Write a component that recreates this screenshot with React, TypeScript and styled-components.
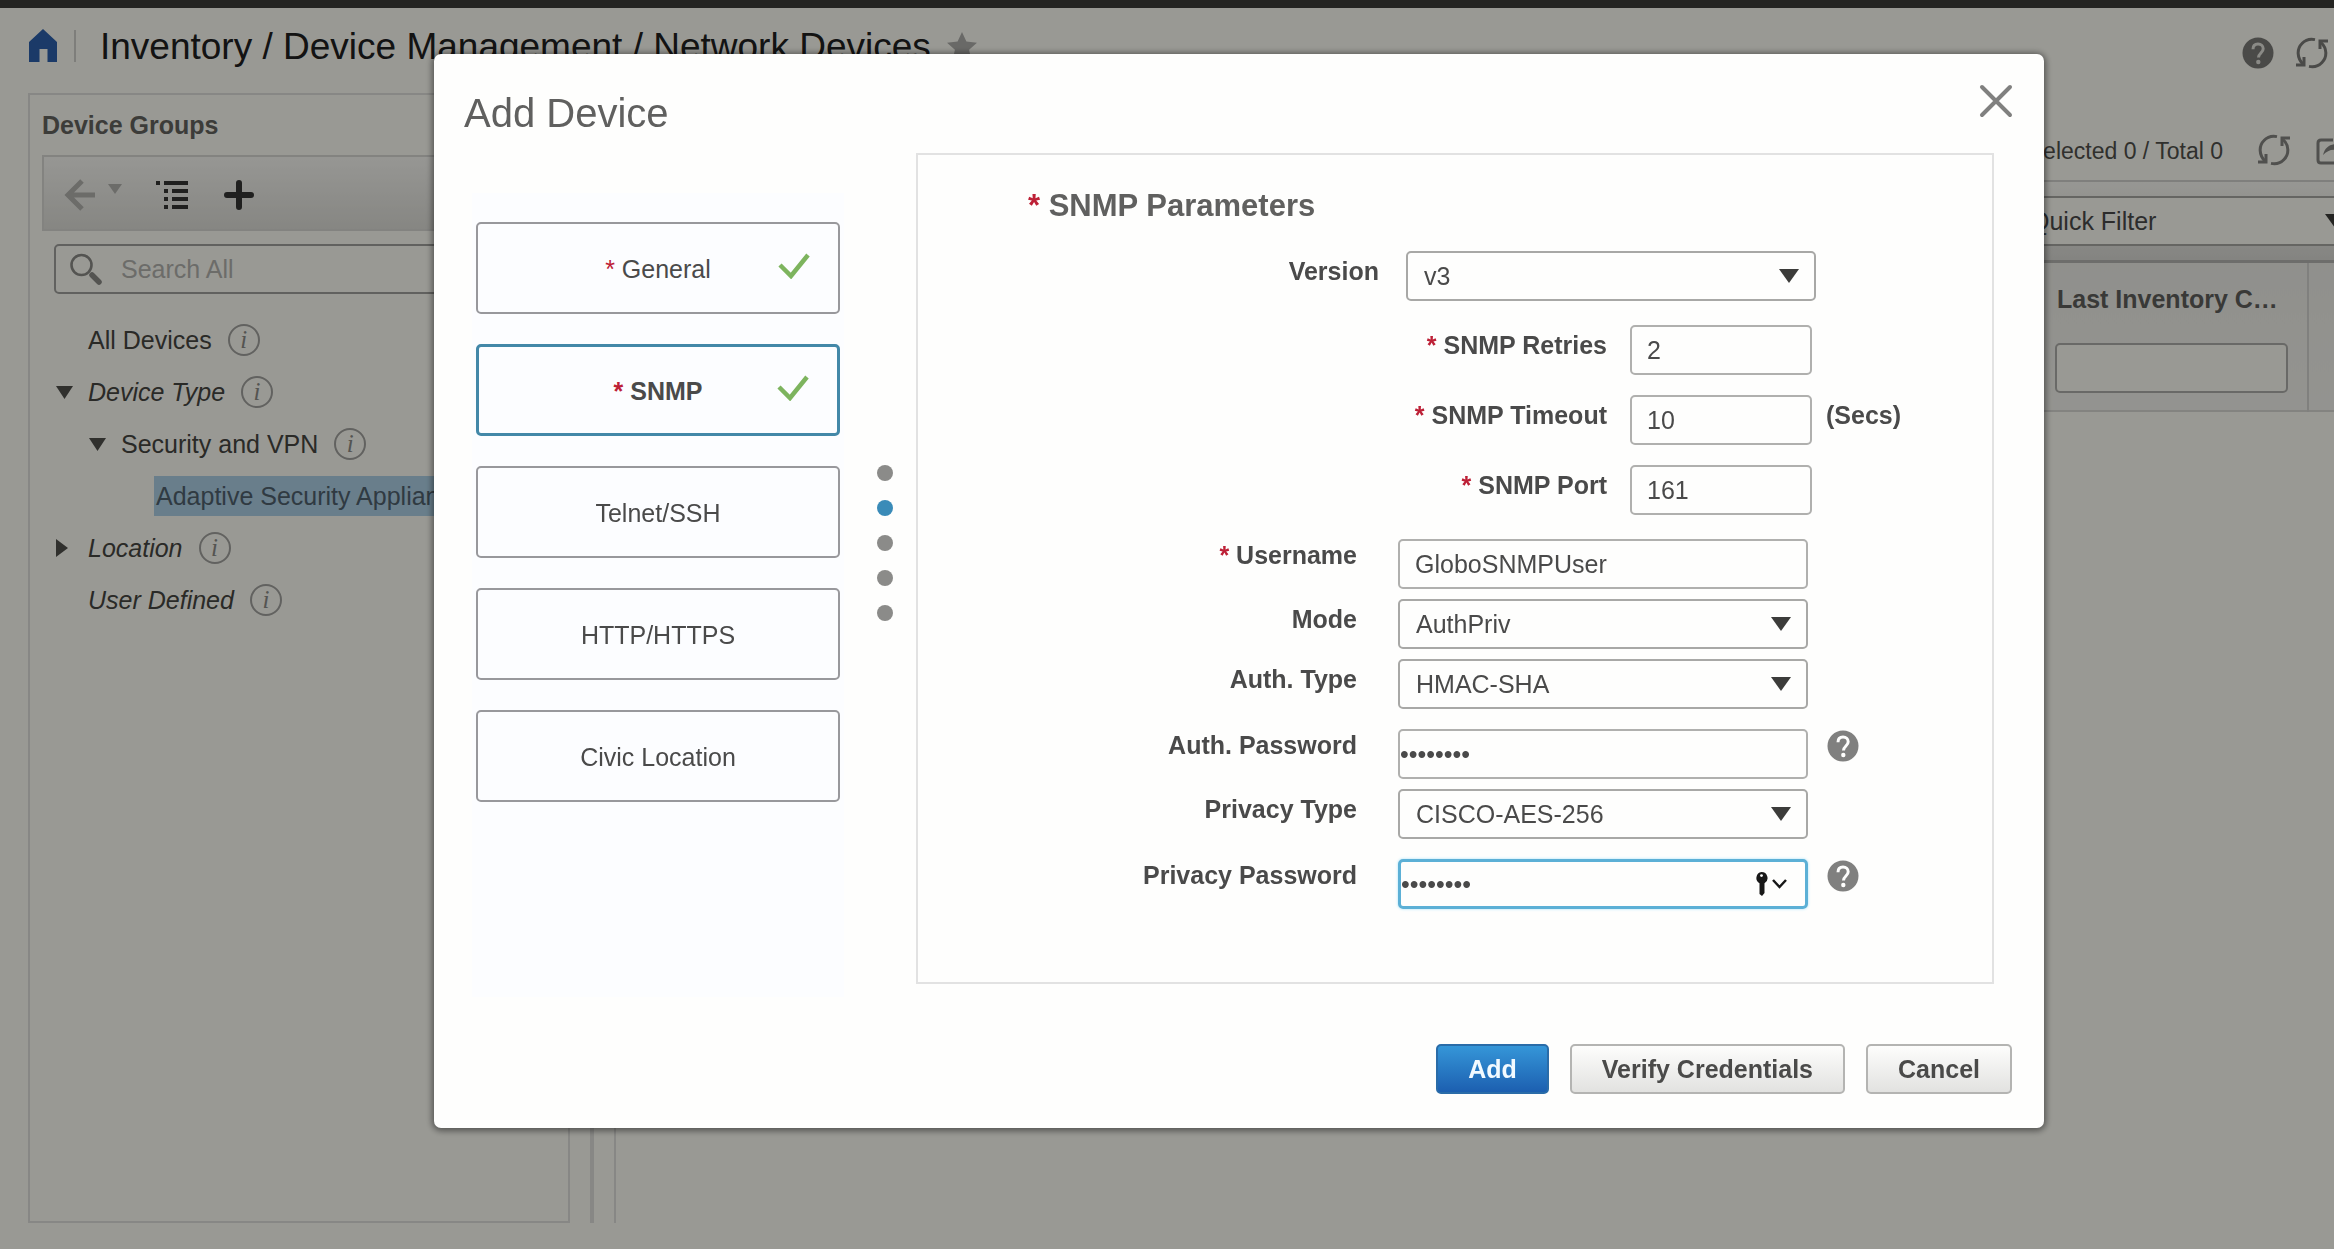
import React from "react";
import styled, { createGlobalStyle, css } from "styled-components";

const GlobalStyle = createGlobalStyle`
  * { box-sizing: border-box; }
  body { margin: 0; overflow: hidden; background: #fffff7; }
  body, button, input, select {
    font-family: "Liberation Sans", Arial, Helvetica, sans-serif;
    font-size: 25px;
    line-height: 28px;
    color: #4a4a4a;
  }
  button { cursor: pointer; }
`;

const Page = styled.div`
  display: flex;
  flex-direction: column;
  min-height: 100vh;
  overflow: hidden;
  padding-bottom: 26px;
  border-top: 8px solid #3c3c39;
`;

const PlainButton = styled.button`
  display: flex;
  padding: 0;
  border: 0;
  background: none;
  color: inherit;
`;

/* ---------- page header ---------- */

const PageHeader = styled.header`
  display: flex;
  align-items: center;
  height: 76px;
  margin-bottom: 9px;
  padding: 0 6px 0 28px;
`;

const HomeLink = styled.a`
  display: flex;
  padding-right: 16px;
  color: #2d62ad;
`;

const PageTitle = styled.h1`
  margin: 0;
  padding: 2px 0 0 24px;
  font-size: 37px;
  line-height: 42px;
  font-weight: 400;
  color: #202020;
  white-space: nowrap;
`;

const TitleRule = styled.span`
  width: 2px;
  height: 32px;
  background: #d2d2ce;
`;

const StarButton = styled(PlainButton)`
  padding-left: 16px;
  color: #b0b0ac;
`;

const HeaderTools = styled.div`
  display: flex;
  gap: 22px;
  margin-left: auto;
  padding-top: 14px;
  color: #7c7c78;
`;

/* ---------- background content ---------- */

const Main = styled.main`
  display: flex;
  flex: 1;
  margin: 0 -40px 0 28px;
`;

const GroupPanel = styled.aside`
  width: 542px;
  flex: none;
  border: 2px solid #e2e2de;
`;

const PanelTitle = styled.h2`
  margin: 16px 12px;
  font-size: 25px;
  line-height: 28px;
  color: #646460;
`;

const GroupToolbar = styled.div`
  display: flex;
  align-items: center;
  height: 76px;
  margin: 0 12px;
  padding: 4px 20px 0;
  border: 2px solid #dadad6;
  background: linear-gradient(#fbfbf6, #e0e0da);
  color: #363634;
`;

const BackButton = styled(PlainButton)`
  gap: 12px;
  margin-right: 34px;
  color: #b4b4b0;
`;

const ListButton = styled(PlainButton)`
  margin-right: 36px;
`;

const SearchBox = styled.label`
  display: flex;
  align-items: center;
  height: 50px;
  margin: 13px 24px 20px;
  padding-left: 14px;
  border: 2px solid #a2a29e;
  border-radius: 5px;
  color: #8c8c88;
`;

const SearchInput = styled.input`
  flex: 1;
  min-width: 0;
  padding: 0 19px;
  border: 0;
  background: none;
  &::placeholder { color: #b4b4b0; }
`;

const TreeList = styled.ul`
  margin: 0;
  padding: 0 0 0 26px;
  list-style: none;
  overflow: hidden;
`;

const TreeRow = styled.li<{ $level: number; $italic?: boolean }>`
  display: flex;
  align-items: center;
  height: 52px;
  padding-left: ${(p) => p.$level * 33}px;
  font-style: ${(p) => (p.$italic ? "italic" : "normal")};
  color: #464642;
  white-space: nowrap;
`;

const Twisty = styled.span`
  display: flex;
  width: 32px;
  flex: none;
`;

const TreeLabel = styled.span<{ $selected?: boolean }>`
  ${(p) =>
    p.$selected &&
    css`
      flex: 1;
      padding: 6px 0 6px 2px;
      background: #afd3e8;
      color: #50626e;
    `}
`;

const InfoBadge = styled.span`
  display: flex;
  align-items: center;
  justify-content: center;
  width: 32px;
  height: 32px;
  margin-left: 16px;
  border: 2px solid #a4a4a0;
  border-radius: 50%;
  font: italic 25px "Liberation Serif", serif;
  color: #8c8c88;
`;

const Splitter = styled.div`
  width: 4px;
  flex: none;
  margin: 0 20px;
  background: #e2e2de;
`;

const DevicePanel = styled.section`
  display: flex;
  flex: 1;
  flex-direction: column;
  border-left: 2px solid #e2e2de;
`;

const Summary = styled.div`
  display: flex;
  align-items: center;
  justify-content: flex-end;
  height: 87px;
  gap: 26px;
  padding: 26px 26px 0 0;
  font-size: 23px;
  color: #50504c;
`;

const SummaryText = styled.span`
  padding: 2px 9px 0 0;
`;

const SummaryIcons = styled.div`
  display: flex;
  gap: 26px;
  color: #868682;
`;

const FilterBar = styled.div`
  display: flex;
  justify-content: flex-end;
  padding: 14px 12px;
  border-top: 2px solid #d4d4d0;
  background: linear-gradient(#fcfcf6, #dcdcd7);
`;

const DeviceTable = styled.table`
  width: 100%;
  border-collapse: collapse;
  table-layout: fixed;
  background: linear-gradient(#f0f0ea, #f6f6f0);
  border-top: 3px solid #b6b6b2;
  border-bottom: 2px solid #dadad6;
`;

const HeadCell = styled.th<{ $width?: number }>`
  width: ${(p) => (p.$width ? `${p.$width}px` : "auto")};
  height: 149px;
  padding: 22px 19px 0 12px;
  border-right: 2px solid #d6d6d2;
  text-align: left;
  vertical-align: top;
  color: #60605c;
`;

const ColumnName = styled.span`
  padding-left: 2px;
`;

const ColumnFilter = styled.input`
  display: block;
  width: 100%;
  height: 50px;
  margin-top: 30px;
  border: 2px solid #b0b0ac;
  border-radius: 5px;
  background: #fffff7;
`;

/* ---------- select ---------- */

const SelectFrame = styled.span<{ $dim?: boolean }>`
  display: grid;
  width: ${(p) => (p.$dim ? 350 : 410)}px;
  align-items: center;
  & > * { grid-area: 1 / 1; }
  & > svg { justify-self: end; margin-right: 17px; pointer-events: none; }
`;

const SelectControl = styled.select<{ $dim?: boolean }>`
  width: 100%;
  height: 50px;
  padding: 0 48px 0 16px;
  appearance: none;
  border: 2px solid ${(p) => (p.$dim ? "#a8a8a4" : "#a8a8a6")};
  border-radius: 5px;
  background: ${(p) => (p.$dim ? "#fffff7" : "#fefefd")};
`;

/* ---------- dialog ---------- */

const Scrim = styled.div`
  position: fixed;
  inset: 0;
  display: flex;
  align-items: flex-start;
  padding: 54px 290px 0 434px;
  background: rgba(0, 0, 0, 0.4);
`;

const Dialog = styled.section`
  flex: 1;
  border-radius: 7px;
  background: #fefefd;
  box-shadow: 0 1px 6px 2px rgba(0, 0, 0, 0.45);
`;

const DialogHeader = styled.header`
  display: flex;
  align-items: flex-start;
  justify-content: space-between;
  padding: 30px 31px 17px 30px;
`;

const DialogTitle = styled.h2`
  margin: 0;
  padding-top: 6px;
  font-size: 40px;
  line-height: 46px;
  font-weight: 400;
  color: #60605f;
`;

const CloseButton = styled(PlainButton)`
  color: #80807f;
`;

const DialogBody = styled.div`
  display: flex;
  align-items: flex-start;
  padding: 0 50px 0 38px;
`;

const Steps = styled.nav`
  display: flex;
  flex: none;
  flex-direction: column;
  gap: 30px;
  width: 372px;
  margin-top: 40px;
  padding: 29px 4px 195px;
  background: #fcfdff;
`;

const StepButton = styled.button<{ $active?: boolean }>`
  display: grid;
  align-items: center;
  justify-items: center;
  height: 92px;
  padding: 2px 28px 0;
  border: ${(p) => (p.$active ? "3px solid #4388a8" : "2px solid #98989c")};
  border-radius: 5px;
  background: #fcfdff;
  font-weight: ${(p) => (p.$active ? 700 : 400)};
  & > * { grid-area: 1 / 1; }
  & > svg { justify-self: end; margin-bottom: 6px; }
`;

const Star = styled.span`
  color: #bd2036;
`;

const Dots = styled.div`
  display: flex;
  flex: none;
  flex-direction: column;
  gap: 19px;
  margin: 312px 23px 0 33px;
`;

const Dot = styled.span<{ $active?: boolean }>`
  width: 16px;
  height: 16px;
  border-radius: 50%;
  background: ${(p) => (p.$active ? "#3a8bb8" : "#8b8b89")};
`;

const FormBox = styled.form`
  flex: 1;
  padding-bottom: 73px;
  border: 2px solid #e2e2e2;
`;

const FormTitle = styled.h3`
  margin: 33px 0 27px 110px;
  font-size: 31px;
  line-height: 36px;
  color: #60605f;
`;

const FieldGroup = styled.div<{ $labelWidth: number; $labelGap: number; $gap: number }>`
  display: flex;
  flex-direction: column;
  gap: ${(p) => p.$gap}px;
  margin-bottom: 24px;
  --label-width: ${(p) => p.$labelWidth}px;
  --label-gap: ${(p) => p.$labelGap}px;
  &:last-child { margin-bottom: 0; }
`;

const FieldRow = styled.div<{ $spaced?: boolean }>`
  display: flex;
  align-items: flex-start;
  padding-top: ${(p) => (p.$spaced ? 10 : 0)}px;
`;

const FieldLabel = styled.label<{ $raised?: boolean }>`
  width: var(--label-width);
  margin-right: var(--label-gap);
  padding-top: ${(p) => (p.$raised ? 2 : 6)}px;
  font-weight: 700;
  text-align: right;
`;

const TextInput = styled.input<{ $narrow?: boolean }>`
  width: ${(p) => (p.$narrow ? 182 : 410)}px;
  height: 50px;
  padding: 0 15px;
  border: 2px solid #b0b0ae;
  border-radius: 5px;
  background: #fefefd;
`;

const PasswordFrame = styled.span<{ $focused?: boolean }>`
  display: flex;
  align-items: center;
  width: 410px;
  height: 50px;
  padding-right: 18px;
  border: ${(p) => (p.$focused ? "3px solid #5cb0d6" : "2px solid #b0b0ae")};
  border-radius: 5px;
  box-shadow: ${(p) => (p.$focused ? "0 0 3px #a5e2fa" : "none")};
`;

const PasswordInput = styled.input`
  flex: 1;
  min-width: 0;
  padding: 0;
  border: 0;
  outline: 0;
  background: none;
`;

const Unit = styled.span`
  padding: 6px 0 0 14px;
  font-weight: 700;
`;

const HelpButton = styled(PlainButton)`
  padding: 1px 0 0 19px;
  color: #80807f;
`;

const DialogFooter = styled.footer`
  display: flex;
  justify-content: flex-end;
  gap: 21px;
  padding: 47px 32px 34px;
`;

const ActionButton = styled.button<{ $primary?: boolean }>`
  height: 50px;
  padding: 0 30px;
  border: 2px solid ${(p) => (p.$primary ? "#2a6ca8" : "#b4b4b2")};
  border-radius: 5px;
  background: ${(p) =>
    p.$primary ? "linear-gradient(#3596d8, #1c5fb0)" : "linear-gradient(#fdfdfc, #e2e2e0)"};
  color: ${(p) => (p.$primary ? "#f2faff" : "#4a4a49")};
  font-weight: 700;
`;

/* ---------- icons ---------- */

const Caret = () => (
  <svg width="20" height="14" viewBox="0 0 20 14" aria-hidden="true">
    <path d="M0 0H20L10 14Z" fill="#3c3c3a" />
  </svg>
);

const HelpIcon = ({ mark = "#fefefd" }: { mark?: string }) => (
  <svg width="32" height="32" viewBox="0 0 32 32" aria-hidden="true">
    <circle cx="16" cy="16" r="15.5" fill="currentColor" />
    <path d="M11 12.2C11 8.8 13 7 16 7s5.200 1.800 5.200 4.800c0 4-4.700 4.400-4.700 8.700" fill="none" stroke={mark} strokeWidth="3" />
    <circle cx="16.300" cy="25" r="2.200" fill={mark} />
  </svg>
);

const RefreshIcon = () => (
  <svg width="32" height="32" viewBox="0 0 32 32" fill="none" stroke="currentColor" strokeWidth="3" aria-hidden="true">
    <path d="M7 27C1 21 .5 12 6 6.500C9.500 2.800 14 1.600 19 2.600" />
    <path d="M25 5.500C31 11 31.500 20 26 25.500C22.500 29.200 18 30.400 13 29.400" />
    <path d="M32 4H24V12" />
    <path d="M0 28H8V20" />
  </svg>
);

const ExportIcon = () => (
  <svg width="32" height="32" viewBox="0 0 32 32" fill="none" stroke="currentColor" strokeWidth="3" aria-hidden="true">
    <path d="M17 6H5Q2 6 2 9v17q0 3 3 3h18q3 0 3-3v-5" />
    <path d="M7 21C9 13 14 10 21 10V4l10 9-10 9v-6C15 15 11 17 7 21Z" fill="currentColor" stroke="none" />
  </svg>
);

const CheckIcon = () => (
  <svg width="32" height="26" viewBox="0 0 32 26" aria-hidden="true">
    <path d="M2 12L13 23L30 2" fill="none" stroke="#7db45e" strokeWidth="4.500" />
  </svg>
);

const DownTwisty = () => (
  <svg width="17" height="13" viewBox="0 0 17 13" aria-hidden="true">
    <path d="M0 0H17L8.500 13Z" fill="#50504c" />
  </svg>
);

const RightTwisty = () => (
  <svg width="12" height="18" viewBox="0 0 12 18" aria-hidden="true">
    <path d="M0 0V18L12 9Z" fill="#50504c" />
  </svg>
);

/* ---------- composed parts ---------- */

type TreeItem = { label: string; level: number; state?: "open" | "closed"; italic?: boolean; selected?: boolean };

const tree: TreeItem[] = [
  { label: "All Devices", level: 0 },
  { label: "Device Type", level: 0, state: "open", italic: true },
  { label: "Security and VPN", level: 1, state: "open" },
  { label: "Adaptive Security Appliances", level: 2, selected: true },
  { label: "Location", level: 0, state: "closed", italic: true },
  { label: "User Defined", level: 0, italic: true },
];

const steps = [
  { label: "General", required: true, done: true },
  { label: "SNMP", required: true, done: true, active: true },
  { label: "Telnet/SSH" },
  { label: "HTTP/HTTPS" },
  { label: "Civic Location" },
];

const NumberField = ({ id, label, value, unit }: { id: string; label: string; value: string; unit?: string }) => (
  <FieldRow>
    <FieldLabel htmlFor={id}>
      <Star>*</Star> {label}
    </FieldLabel>
    <TextInput id={id} defaultValue={value} $narrow />
    {unit && <Unit>{unit}</Unit>}
  </FieldRow>
);

const SelectField = ({ id, label, value }: { id: string; label: string; value: string }) => (
  <FieldRow>
    <FieldLabel htmlFor={id}>{label}</FieldLabel>
    <SelectFrame>
      <SelectControl id={id} defaultValue={value}>
        <option>{value}</option>
      </SelectControl>
      <Caret />
    </SelectFrame>
  </FieldRow>
);

const PasswordField = ({ id, label, focused }: { id: string; label: string; focused?: boolean }) => (
  <FieldRow $spaced>
    <FieldLabel htmlFor={id} $raised>
      {label}
    </FieldLabel>
    <PasswordFrame $focused={focused}>
      <PasswordInput id={id} type="password" defaultValue="password" />
      {focused && (
        <svg width="32" height="24" viewBox="0 0 32 24" aria-hidden="true">
          <path d="M6.500 0a6 6 0 0 1 3 11.200V21L7 24 4.500 22V11.200A6 6 0 0 1 6.500 0Z" fill="#181818" />
          <circle cx="6.500" cy="3.600" r="1.400" fill="#fefefd" />
          <path d="M18 8l6.500 7L31 8" fill="none" stroke="#181818" strokeWidth="2.500" />
        </svg>
      )}
    </PasswordFrame>
    <HelpButton type="button" aria-label={`${label} help`}>
      <HelpIcon />
    </HelpButton>
  </FieldRow>
);

export default function App() {
  return (
    <>
      <GlobalStyle />
      <Page>
        <PageHeader>
          <HomeLink href="#" aria-label="Home">
            <svg width="30" height="34" viewBox="0 0 30 34" aria-hidden="true">
              <path d="M15 0L29 13V33H19.500V20H11.500V33H1V13Z" fill="currentColor" />
            </svg>
          </HomeLink>
          <TitleRule />
          <PageTitle>Inventory / Device Management / Network Devices</PageTitle>
          <StarButton aria-label="Add to favorites">
            <svg width="30" height="28" viewBox="0 0 30 28" aria-hidden="true">
              <path d="M15 0l4.400 9.600L30 10.700l-7.900 7L24.300 28 15 22.700 5.700 28l2.200-10.300L0 10.700l10.600-1.100Z" fill="currentColor" />
            </svg>
          </StarButton>
          <HeaderTools>
            <PlainButton aria-label="Help"><HelpIcon mark="#e6e6e0" /></PlainButton>
            <PlainButton aria-label="Refresh page"><RefreshIcon /></PlainButton>
          </HeaderTools>
        </PageHeader>
        <Main>
          <GroupPanel>
            <PanelTitle>Device Groups</PanelTitle>
            <GroupToolbar>
              <BackButton aria-label="Back">
                <svg width="32" height="32" viewBox="0 0 32 32" fill="none" stroke="currentColor" strokeWidth="5" aria-hidden="true">
                  <path d="M18 2L4 16L18 30M3 16H31" />
                </svg>
                <svg width="14" height="20" viewBox="0 0 14 20" aria-hidden="true">
                  <path d="M0 5H14L7 15Z" fill="currentColor" />
                </svg>
              </BackButton>
              <ListButton aria-label="Expand list">
                <svg width="32" height="30" viewBox="0 0 32 30" stroke="currentColor" strokeWidth="4" aria-hidden="true">
                  <path d="M0 3H4M8 3H32M8 11H12M16 11H32M8 19H12M16 19H32M8 27H12M16 27H32" />
                </svg>
              </ListButton>
              <PlainButton aria-label="Add group">
                <svg width="30" height="30" viewBox="0 0 30 30" stroke="currentColor" strokeWidth="6" strokeLinecap="round" aria-hidden="true">
                  <path d="M15 3V27M3 15H27" />
                </svg>
              </PlainButton>
            </GroupToolbar>
            <SearchBox>
              <svg width="32" height="32" viewBox="0 0 32 32" fill="none" stroke="currentColor" aria-hidden="true">
                <circle cx="11.500" cy="12" r="10" strokeWidth="2.600" />
                <path d="M22 22L29 29" strokeWidth="5.500" strokeLinecap="round" />
              </svg>
              <SearchInput aria-label="Search groups" placeholder="Search All" />
            </SearchBox>
            <TreeList>
              {tree.map((item) => (
                <TreeRow key={item.label} $level={item.level} $italic={item.italic}>
                  <Twisty>
                    {item.state === "open" && <DownTwisty />}
                    {item.state === "closed" && <RightTwisty />}
                  </Twisty>
                  <TreeLabel $selected={item.selected}>{item.label}</TreeLabel>
                  {!item.selected && <InfoBadge>i</InfoBadge>}
                </TreeRow>
              ))}
            </TreeList>
          </GroupPanel>
          <Splitter />
          <DevicePanel>
            <Summary>
              <SummaryText>Selected 0 / Total 0</SummaryText>
              <SummaryIcons>
                <PlainButton aria-label="Refresh list"><RefreshIcon /></PlainButton>
                <PlainButton aria-label="Export list"><ExportIcon /></PlainButton>
              </SummaryIcons>
            </Summary>
            <FilterBar>
              <SelectFrame $dim>
                <SelectControl $dim aria-label="Filter" defaultValue="Quick Filter">
                  <option>Quick Filter</option>
                </SelectControl>
                <Caret />
              </SelectFrame>
            </FilterBar>
            <DeviceTable>
              <thead>
                <tr>
                  <HeadCell aria-label="Devices" />
                  <HeadCell $width={266}>
                    <ColumnName>Last Inventory C…</ColumnName>
                    <ColumnFilter aria-label="Filter by last inventory collection" />
                  </HeadCell>
                  <HeadCell $width={65} aria-label="Options" />
                </tr>
              </thead>
            </DeviceTable>
          </DevicePanel>
        </Main>
      </Page>
      <Scrim>
        <Dialog role="dialog" aria-modal="true" aria-labelledby="dialog-title">
          <DialogHeader>
            <DialogTitle id="dialog-title">Add Device</DialogTitle>
            <CloseButton aria-label="Close">
              <svg width="34" height="34" viewBox="0 0 34 34" stroke="currentColor" strokeWidth="4" strokeLinecap="round" aria-hidden="true">
                <path d="M3 3L31 31M31 3L3 31" />
              </svg>
            </CloseButton>
          </DialogHeader>
          <DialogBody>
            <Steps aria-label="Steps">
              {steps.map((step) => (
                <StepButton key={step.label} type="button" $active={step.active}>
                  <span>
                    {step.required && <Star>* </Star>}
                    {step.label}
                  </span>
                  {step.done && <CheckIcon />}
                </StepButton>
              ))}
            </Steps>
            <Dots>
              {steps.map((step) => (
                <Dot key={step.label} $active={step.active} />
              ))}
            </Dots>
            <FormBox>
              <FormTitle>
                <Star>*</Star> SNMP Parameters
              </FormTitle>
              <FieldGroup $labelWidth={461} $labelGap={27} $gap={0}>
                <SelectField id="version" label="Version" value="v3" />
              </FieldGroup>
              <FieldGroup $labelWidth={689} $labelGap={23} $gap={20}>
                <NumberField id="retries" label="SNMP Retries" value="2" />
                <NumberField id="timeout" label="SNMP Timeout" value="10" unit="(Secs)" />
                <NumberField id="port" label="SNMP Port" value="161" />
              </FieldGroup>
              <FieldGroup $labelWidth={439} $labelGap={41} $gap={10}>
                <FieldRow>
                  <FieldLabel htmlFor="username" $raised>
                    <Star>*</Star> Username
                  </FieldLabel>
                  <TextInput id="username" defaultValue="GloboSNMPUser" />
                </FieldRow>
                <SelectField id="mode" label="Mode" value="AuthPriv" />
                <SelectField id="auth-type" label="Auth. Type" value="HMAC-SHA" />
                <PasswordField id="auth-password" label="Auth. Password" />
                <SelectField id="privacy-type" label="Privacy Type" value="CISCO-AES-256" />
                <PasswordField id="privacy-password" label="Privacy Password" focused />
              </FieldGroup>
            </FormBox>
          </DialogBody>
          <DialogFooter>
            <ActionButton $primary>Add</ActionButton>
            <ActionButton>Verify Credentials</ActionButton>
            <ActionButton>Cancel</ActionButton>
          </DialogFooter>
        </Dialog>
      </Scrim>
    </>
  );
}
